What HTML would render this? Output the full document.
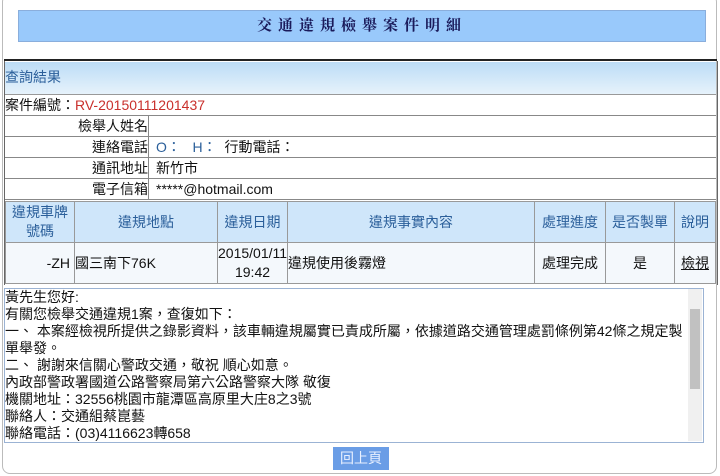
<!DOCTYPE html>
<html><head><meta charset="utf-8"><style>
body{margin:0;width:720px;height:476px;background:#fff;font-family:"Liberation Sans","Noto Sans CJK TC",sans-serif;font-size:13px;color:#111;position:relative;overflow:hidden}
.a{position:absolute}
.outer{left:2px;top:-6px;width:713px;height:478px;border:1px solid #bbb;border-radius:8px}
.title{left:18px;top:10px;width:686px;height:30px;background:#99c9fb;border:1px solid #8aaedc;text-align:center;line-height:30px;font-family:"Liberation Serif","Noto Serif CJK SC",serif;font-weight:bold;color:#1a1a5a;font-size:15px;letter-spacing:6px}
.bl{left:4px;top:59px;width:713px;height:2px;background:#222}
.frame{left:4px;top:61px;width:712px;height:224px;border-left:1px solid #666;border-right:1px solid #666}
.hd{left:5px;top:62px;width:711px;height:32px;background:linear-gradient(#bcdcf6,#e6f2fb);border-bottom:1px solid #999;color:#2b5f9a;line-height:30px;font-size:14px}
.row{left:5px;width:711px;height:20px;border-bottom:1px solid #888;line-height:20px;font-size:14px}
.lab{position:absolute;left:0;width:143px;text-align:right;border-right:1px solid #888;height:20px}
.val{position:absolute;left:151px}
table{position:absolute;left:5px;top:201px;width:711px;border-collapse:collapse;font-size:14px}
td{border:1px solid #999;text-align:center;padding:0}
tr.h td{background:#cfe6fa;color:#2b5f9a;height:40px;line-height:19px}
tr.d td{background:#f4f8fc;height:40px;line-height:19px}
.ta{left:4px;top:288px;width:698px;height:153px;border:1px solid #9bb3d4;font-size:14px;line-height:17px}
.sb{left:688px;top:289px;width:14px;height:152px;background:#f0f0f0}
.btn{left:333px;top:447px;width:56px;height:23px;background:#6a9de6;color:#e8f0ff;text-align:center;line-height:23px;font-size:14px}
</style></head><body>
<div class="a outer"></div>
<div class="a title">交通違規檢舉案件明細</div>
<div class="a bl"></div>
<div class="a frame"></div>
<div class="a hd">查詢結果</div>
<div class="a row" style="top:95px"><span>案件編號：</span><span style="color:#c9302c">RV-20150111201437</span></div>
<div class="a row" style="top:116px"><div class="lab">檢舉人姓名</div></div>
<div class="a row" style="top:137px"><div class="lab">連絡電話</div><div class="val" style="color:#2b5f9a">O：&nbsp;&nbsp; H：&nbsp; <span style="color:#111">行動電話：</span></div></div>
<div class="a row" style="top:158px"><div class="lab">通訊地址</div><div class="val">新竹市</div></div>
<div class="a row" style="top:179px"><div class="lab">電子信箱</div><div class="val">*****@hotmail.com</div></div>
<table>
<tr class="h"><td style="width:68px">違規車牌<br>號碼</td><td style="width:142px">違規地點</td><td style="width:64px">違規日期</td><td style="width:246px">違規事實內容</td><td style="width:70px">處理進度</td><td style="width:68px">是否製單</td><td>說明</td></tr>
<tr class="d"><td style="text-align:right;padding-right:4px">-ZH</td><td style="text-align:left">國三南下76K</td><td>2015/01/11<br>19:42</td><td style="text-align:left">違規使用後霧燈</td><td>處理完成</td><td>是</td><td style="text-decoration:underline">檢視</td></tr>
</table>
<div class="a ta">黃先生您好:<br>有關您檢舉交通違規1案，查復如下：<br>一、 本案經檢視所提供之錄影資料，該車輛違規屬實已責成所屬，依據道路交通管理處罰條例第42條之規定製<br>單舉發。<br>二、 謝謝來信關心警政交通，敬祝 順心如意。<br>內政部警政署國道公路警察局第六公路警察大隊 敬復<br>機關地址：32556桃園市龍潭區高原里大庄8之3號<br>聯絡人：交通組蔡崑藝<br>聯絡電話：(03)4116623轉658</div>
<div class="a sb"><div class="a" style="left:2px;top:20px;width:10px;height:80px;background:#c1c1c1"></div></div>
<div class="a btn">回上頁</div>
</body></html>
